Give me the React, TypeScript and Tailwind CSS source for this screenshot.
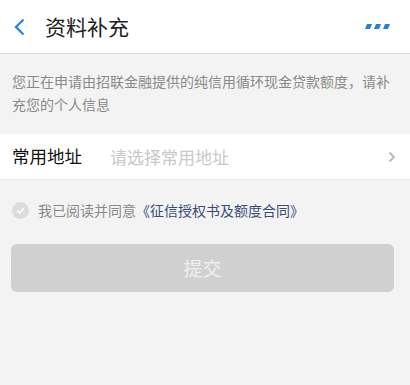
import React from "react";

export default function App() {
  const font = { fontFamily: '"Noto Sans CJK SC", "Noto Sans", sans-serif' };
  return (
    <div className="w-[410px] h-[385px] bg-[#f3f3f3] flex flex-col" style={font}>
      <div className="h-[54px] bg-white border-b border-[#dedede] flex items-center px-[13px] shrink-0">
        <svg width="14" height="20" viewBox="0 0 14 20" className="mr-[18px]">
          <path d="M10.5 2.5 L3 10 L10.5 17.5" fill="none" stroke="#2a8ad6" strokeWidth="2.4" strokeLinecap="butt" strokeLinejoin="miter" />
        </svg>
        <div className="text-[21px] text-[#222] leading-none">资料补充</div>
        <div className="flex-1" />
        <svg width="28" height="6" viewBox="0 0 28 6" className="mr-[4px]">
          <polygon points="2,0 7,0 5,5 0,5" fill="#2a7fd0" />
          <polygon points="11,0 16,0 14,5 9,5" fill="#2a7fd0" />
          <polygon points="20,0 25,0 23,5 18,5" fill="#2a7fd0" />
        </svg>
      </div>
      <div className="pl-[12px] pr-[20px] pt-[16px] text-[14px] leading-[23px] text-[#8a8a8a] h-[80px] shrink-0">
        您正在申请由招联金融提供的纯信用循环现金贷款额度，请补充您的个人信息
      </div>
      <div className="h-[46px] bg-white border-b border-[#e6e6e6] flex items-center pl-[12px] pr-[14px] shrink-0">
        <div className="text-[17.5px] text-[#111] w-[98px]">常用地址</div>
        <div className="text-[17px] text-[#c8c8c8] flex-1">请选择常用地址</div>
        <svg width="8" height="12" viewBox="0 0 8 12">
          <path d="M1.5 1.5 L6 6 L1.5 10.5" fill="none" stroke="#b8b8b8" strokeWidth="1.8" />
        </svg>
      </div>
      <div className="flex items-center pl-[12px] mt-[20px] h-[20px]">
        <svg width="17" height="17" viewBox="0 0 17 17" className="mr-[9px]">
          <circle cx="8.5" cy="8.5" r="8.5" fill="#dcdcdc" />
          <path d="M5 8.7 L7.6 11 L12 6.3" fill="none" stroke="#ffffff" strokeWidth="1.6" />
        </svg>
        <span className="text-[14px] text-[#8a8a8a]">我已阅读并同意</span>
        <span className="text-[14px] text-[#3b4a78]">《征信授权书及额度合同》</span>
      </div>
      <div className="mx-[11px] mt-[24px] h-[48px] w-[383px] rounded-[6px] bg-[#d0d0d0] flex items-center justify-center text-[19px] text-[#f0f0f0]">
        提交
      </div>
    </div>
  );
}
